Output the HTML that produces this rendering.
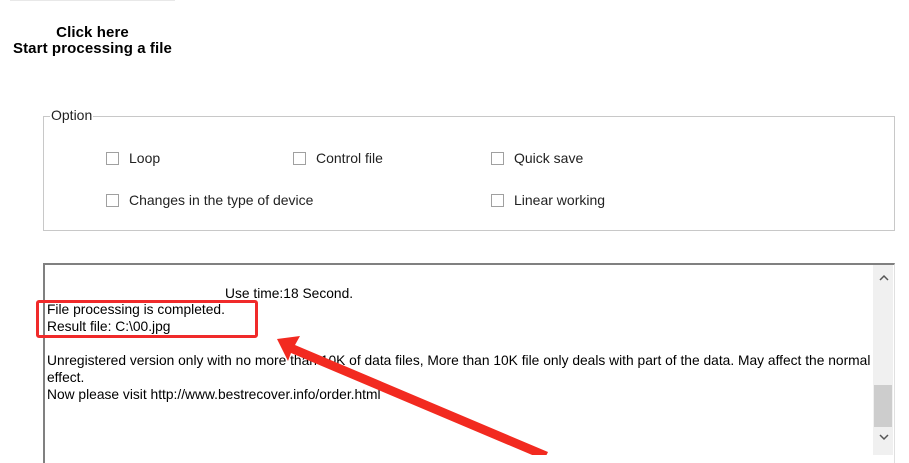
<!DOCTYPE html>
<html><head><style>
body{margin:0;width:909px;height:455px;background:#fff;position:relative;overflow:hidden;font-family:"Liberation Sans",Arial,sans-serif;color:#000}
.a{position:absolute;white-space:nowrap}
.t{font-size:15px;font-weight:bold;text-align:center;line-height:16px;letter-spacing:0.1px}
.cb{position:absolute;width:11px;height:11px;border:1px solid #a0a0a0;background:#fff}
.l{font-size:14px;color:#222}
.m{font-size:13.8px;line-height:17px;letter-spacing:0px}
</style></head><body>
<div class="a" style="left:10px;top:0;width:165px;height:1px;background:#e8e8e8"></div>
<div class="a t" style="left:0;top:25px;width:185px">Click here<br>Start processing a file</div>

<div class="a" style="left:43px;top:116px;width:852px;height:115px;border:1px solid #c8c8c8;box-sizing:border-box"></div>
<div class="a l" style="left:50px;top:107px;background:#fff;padding:0 1px">Option</div>

<div class="cb" style="left:106px;top:152px"></div><div class="a l" style="left:129px;top:150px">Loop</div>
<div class="cb" style="left:293px;top:152px"></div><div class="a l" style="left:316px;top:150px">Control file</div>
<div class="cb" style="left:491px;top:152px"></div><div class="a l" style="left:514px;top:150px">Quick save</div>
<div class="cb" style="left:106px;top:194px"></div><div class="a l" style="left:129px;top:192px">Changes in the type of device</div>
<div class="cb" style="left:491px;top:194px"></div><div class="a l" style="left:514px;top:192px">Linear working</div>

<div class="a" style="left:43px;top:263px;width:852px;height:200px;border-top:2px solid #808080;border-left:2px solid #808080;border-right:1px solid #e0e0e0;box-sizing:border-box"></div>
<div class="a" style="left:873px;top:265px;width:20px;height:190px;background:#f0f0f0"></div>
<div class="a" style="left:874px;top:385px;width:18px;height:42px;background:#cdcdcd"></div>
<svg class="a" style="left:0;top:0" width="909" height="455">
<path d="M880,280 L884,276 L888,280" stroke="#555" stroke-width="1.5" fill="none"/>
<path d="M880,435 L884,439 L888,435" stroke="#555" stroke-width="1.5" fill="none"/>
</svg>

<div class="a m" style="left:225px;top:285px">Use time:18 Second.</div>
<div class="a m" style="left:47px;top:301px">File processing is completed.<br>Result file: C:\00.jpg<br><br>Unregistered version only with no more than 10K of data files, More than 10K file only deals with part of the data. May affect the normal<br>effect.<br>Now please visit http://www.bestrecover.info/order.html</div>

<div class="a" style="left:36px;top:300px;width:222px;height:38px;border:3px solid #f02a2a;border-radius:3px;box-sizing:border-box"></div>
<svg class="a" style="left:0;top:0" width="909" height="455">
<polygon points="277,339 300,336 295,345 548,452 544,460 291,353 288,361" fill="#f22a20"/>
</svg>
</body></html>
